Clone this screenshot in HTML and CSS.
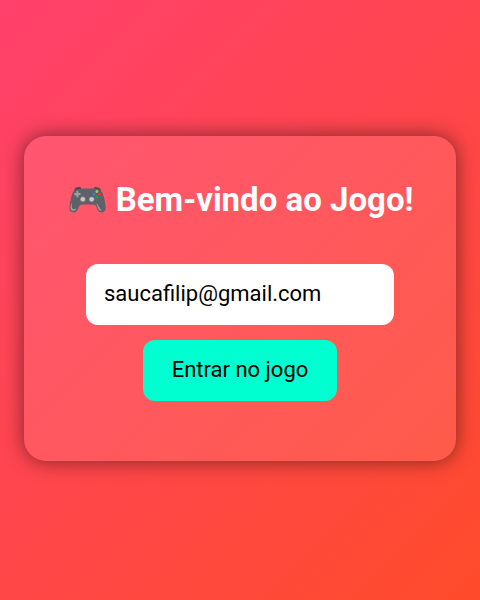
FILE: index.html
```html
<!DOCTYPE html>
<html lang="pt-BR">
<head>
<meta charset="utf-8">
<meta name="viewport" content="width=device-width, initial-scale=1">
<title>Bem-vindo ao Jogo!</title>
<link rel="stylesheet" href="styles.css">
</head>
<body>
<main class="card">
<h1 class="title">🎮 Bem-vindo ao Jogo!</h1>
<form class="form">
<input class="field" type="email" aria-label="E-mail" value="saucafilip@gmail.com">
<button class="submit" type="button">Entrar no jogo</button>
</form>
</main>
</body>
</html>
```

FILE: styles.css
```css
* {
  box-sizing: border-box;
}

body {
  margin: 0;
  min-height: 100vh;
  padding: 0 24px 4px;
  display: flex;
  align-items: center;
  justify-content: center;
  font-family: Roboto, sans-serif;
  background: linear-gradient(135deg, #ff416c, #ff4b2b);
}

.card {
  width: 100%;
  max-width: 500px;
  padding: 45px 40px 60px;
  border-radius: 22px;
  background: rgba(255, 255, 255, 0.1);
  box-shadow: 0 0 20px rgba(0, 0, 0, 0.5);
  text-align: center;
}

.title {
  margin: 0 0 45px;
  color: #fff;
  font-size: 33px;
  line-height: 38px;
  white-space: nowrap;
}

.form {
  display: flex;
  flex-direction: column;
  align-items: center;
  gap: 15px;
}

.field,
.submit {
  height: 61px;
  border: 0;
  border-radius: 12px;
  color: #000;
  font-family: inherit;
  font-size: 22px;
}

.field {
  width: 308px;
  max-width: 100%;
  padding: 0 18px 2px;
  background: #fff;
}

.submit {
  padding: 0 29px 2px;
  background: #00ffd0;
}
```
